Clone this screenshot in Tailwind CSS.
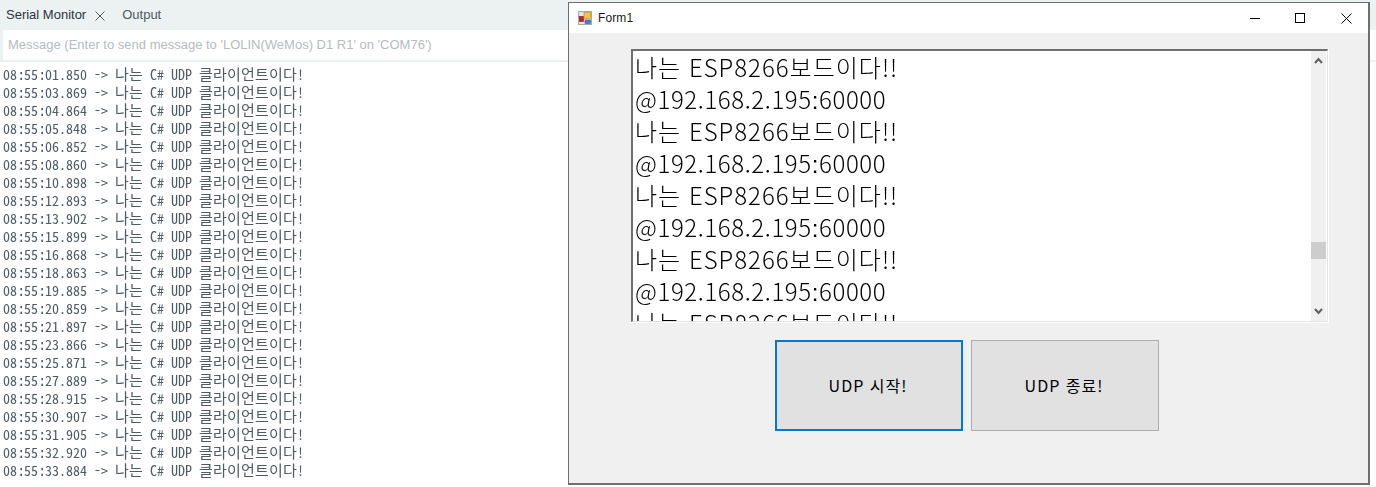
<!DOCTYPE html>
<html lang="ko">
<head>
  <meta charset="UTF-8">
  <title>Serial Monitor</title>
  <script src="https://cdn.jsdelivr.net/npm/@tailwindcss/browser@4"></script>
</head>
<body class="relative w-[1376px] h-[487px] overflow-hidden bg-white font-['Liberation_Sans','Noto_Sans_CJK_KR',sans-serif]">
  <!-- serial monitor panel -->
  <div class="flex flex-col h-full">
    <div class="flex items-center h-[30px] bg-[#ecf1f1] text-[13px] text-[#4e5b61]">
      <span class="ml-[6px] text-[#2c353a]">Serial Monitor</span>
      <svg class="ml-[9px] mt-[2px]" width="10" height="10" viewBox="0 0 10 10" fill="none" stroke="#4e5b61" stroke-width="1"><path d="M0.500 0.500l9 9M9.500 0.500l-9 9"/></svg>
      <span class="ml-[17px]">Output</span>
    </div>
    <div class="bg-[#ecf1f1] h-[32px] pl-[3px] pb-[2px]">
      <div class="flex items-center h-[30px] bg-white rounded-l-[2px] pl-[5px] text-[13px] text-[#b5bcbf]">Message (Enter to send message to 'LOLIN(WeMos) D1 R1' on 'COM76')</div>
    </div>
    <ul id="log" class="pl-[3px] pt-[3px] text-[#4e5b61] will-change-transform"></ul>
  </div>

  <!-- Form1 window -->
  <div class="absolute left-[568px] top-[2px] w-[802px] h-[483px] flex flex-col bg-[#f0f0f0] border border-[#6f6f6f] border-r-2 border-b-2">
    <div class="flex items-center h-[30px] bg-white text-[12px] text-[#1a1a1a] shrink-0">
      <svg class="ml-[9px]" width="14" height="14" viewBox="0 0 14 14">
        <rect x="0.5" y="0.5" width="13" height="13" fill="#e4e4e4" stroke="#a8a8a8"/>
        <rect x="1.500" y="5.500" width="4" height="5" fill="#c8201c" stroke="#7a1512" stroke-width="0.6"/>
        <rect x="6" y="1.500" width="6.500" height="6" fill="#f6c63a" stroke="#b68a1c" stroke-width="0.6"/>
        <rect x="7" y="9" width="5.500" height="3.500" fill="#3f7fd6" stroke="#2a5ca6" stroke-width="0.6"/>
      </svg>
      <span class="ml-[6px] tracking-[0.1px]">Form1</span>
      <div class="ml-auto flex items-center">
        <svg class="mr-[35px]" width="10" height="10" viewBox="0 0 10 10" stroke="#000" fill="none"><path d="M0 5.5h10"/></svg>
        <svg class="mr-[36px]" width="10" height="10" viewBox="0 0 10 10" stroke="#000" fill="none"><rect x="0.5" y="0.5" width="9" height="9"/></svg>
        <svg class="mr-[16px]" width="11" height="11" viewBox="0 0 11 11" stroke="#000" fill="none"><path d="M0.5 0.5l10 10M10.5 0.5l-10 10"/></svg>
      </div>
    </div>
    <div class="flex flex-col items-start pl-[62px] pt-[16px]">
      <div class="w-[698px] h-[274px] border-r border-b border-white">
        <div class="flex h-full border-t-2 border-l-2 border-r border-b border-[#e3e3e3] border-t-[#6f6f6f] border-l-[#6f6f6f] bg-white">
          <div class="flex-1 overflow-hidden pl-[2px] text-[24px] leading-[32px] text-black font-['Noto_Sans_CJK_KR',sans-serif] font-light whitespace-nowrap will-change-transform">
            <p class="h-[32px] tracking-[1px]">나는 ESP8266보드이다!!</p>
            <p class="h-[32px] tracking-[0.6px]">@192.168.2.195<span class="font-['Liberation_Sans']">:</span>60000</p>
            <p class="h-[32px] tracking-[1px]">나는 ESP8266보드이다!!</p>
            <p class="h-[32px] tracking-[0.6px]">@192.168.2.195<span class="font-['Liberation_Sans']">:</span>60000</p>
            <p class="h-[32px] tracking-[1px]">나는 ESP8266보드이다!!</p>
            <p class="h-[32px] tracking-[0.6px]">@192.168.2.195<span class="font-['Liberation_Sans']">:</span>60000</p>
            <p class="h-[32px] tracking-[1px]">나는 ESP8266보드이다!!</p>
            <p class="h-[32px] tracking-[0.6px]">@192.168.2.195<span class="font-['Liberation_Sans']">:</span>60000</p>
            <p class="h-[32px] tracking-[1px]">나는 ESP8266보드이다!!</p>
          </div>
          <div class="relative w-[15px] mr-[1px] bg-[#f0f0f0] flex flex-col justify-between items-center py-[6px] shrink-0">
            <svg width="9" height="7" viewBox="0 0 9 7" fill="none" stroke="#606060" stroke-width="2"><path d="M1 6l3.500-4 3.500 4"/></svg>
            <div class="absolute left-0 top-[191px] w-[15px] h-[17px] bg-[#cdcdcd]"></div>
            <svg width="9" height="7" viewBox="0 0 9 7" fill="none" stroke="#606060" stroke-width="2"><path d="M1 1l3.500 4 3.500-4"/></svg>
          </div>
        </div>
      </div>
      <div class="flex gap-[8px] ml-[144px] mt-[17px] text-[16px] tracking-[1px] text-black font-['Noto_Sans_CJK_KR',sans-serif]">
        <button class="w-[188px] h-[91px] pr-[2px] pb-[2px] bg-[#e1e1e1] border-2 border-[#0078d7]">UDP 시작!</button>
        <button class="w-[188px] h-[91px] pr-[2px] pb-[2px] bg-[#e1e1e1] border border-[#adadad]">UDP 종료!</button>
      </div>
    </div>
  </div>

  <script>
    const log = document.getElementById("log");
    const times = ["01.850", "03.869", "04.864", "05.848", "06.852", "08.860", "10.898", "12.893", "13.902", "15.899", "16.868", "18.863", "19.885", "20.859", "21.897", "23.866", "25.871", "27.889", "28.915", "30.907", "31.905", "32.920", "33.884"];
    const colon = `<span class="inline-block w-[7px] h-[18px] text-center font-['Liberation_Mono']">:</span>`;
    const hangul = (text) => `<span class="inline-block h-[18px] text-[15px] tracking-[0.2px]">${text}</span>`;

    times.forEach((time) => {
      const row = document.createElement("li");
      row.className = "h-[18px] leading-[18px] whitespace-pre text-[14px] font-light font-['Noto_Sans_Mono_CJK_KR','Noto_Sans_CJK_KR',monospace]";
      row.innerHTML = `08${colon}55${colon}${time} -&gt; ${hangul("나는")} C# UDP ${hangul("클라이언트이다")}!`;
      log.appendChild(row);
    });
  </script>
</body>
</html>
